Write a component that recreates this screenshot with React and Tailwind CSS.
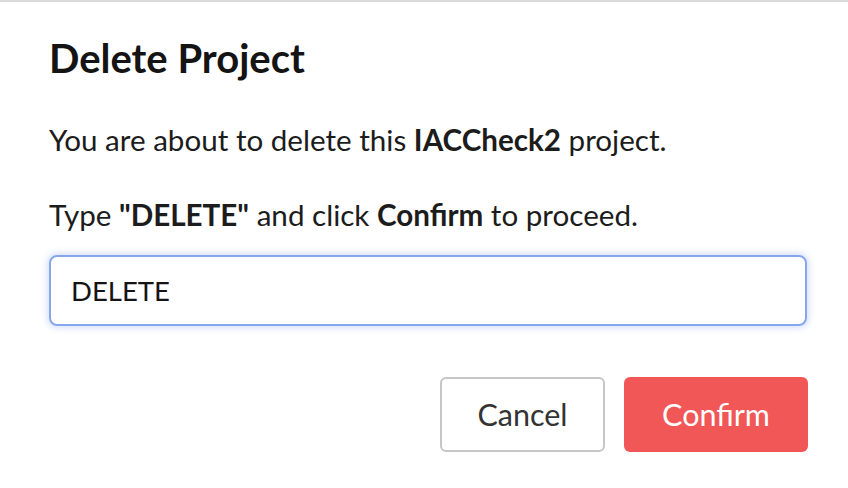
import React from "react";

export default function App() {
  return (
    <div className="w-[848px] h-[488px] bg-white border-t-2 border-[#d9d9d9] pl-[49px] font-['Lato','Noto_Sans',sans-serif] text-[#1c1c1c]">
      <h2 className="mt-[32px] text-[40px] leading-[48px] font-bold text-[#141414]">Delete Project</h2>
      <p className="mt-[40px] text-[29.6px] leading-[36px]">
        You are about to delete this <b>IACCheck2</b> project.
      </p>
      <p className="mt-[39px] text-[29.6px] leading-[36px]">
        Type <b>"DELETE"</b> and click <b>Confirm</b> to proceed.
      </p>
      <input
        defaultValue="DELETE"
        className="mt-[22px] block w-[758px] h-[71px] rounded-[8px] border-2 border-[#86a6ee] px-[20px] text-[27.5px] text-[#141414] outline-none shadow-[0_0_6px_2px_rgba(120,150,240,0.3)]"
      />
      <div className="mt-[51px] flex w-[759px] justify-end gap-[19px]">
        <button className="w-[165px] h-[75px] rounded-[6px] border-2 border-[#c6c6c6] bg-white text-[30.5px] text-[#333]">
          Cancel
        </button>
        <button className="w-[184px] h-[75px] rounded-[6px] bg-[#f25757] text-[30.5px] text-white">
          Confirm
        </button>
      </div>
    </div>
  );
}
